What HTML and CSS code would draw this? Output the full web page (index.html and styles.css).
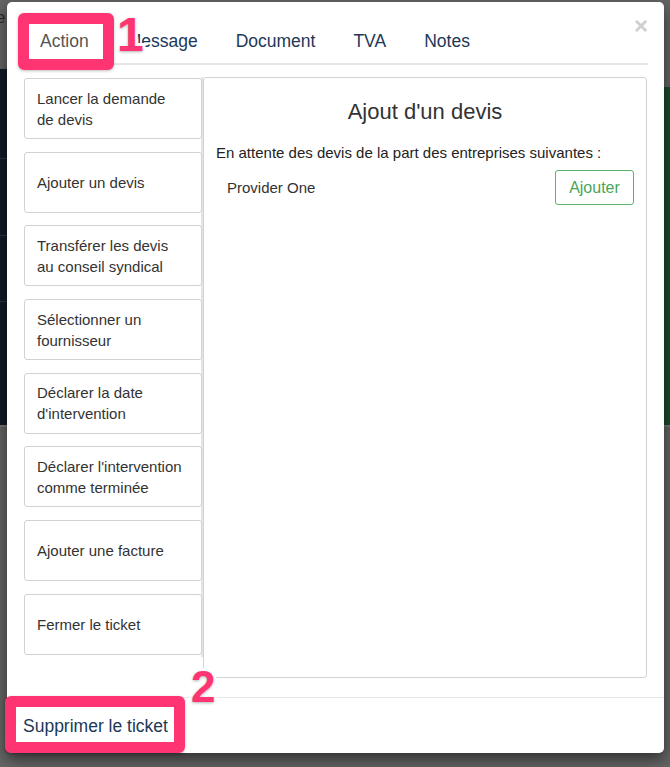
FILE: index.html
```html
<!DOCTYPE html>
<html lang="fr">
<head>
  <meta charset="UTF-8" />
  <title>Ticket</title>
  <link rel="stylesheet" href="styles.css">
</head>
<body>
  <!-- page behind the overlay -->
  <div class="page-bg">
    <span class="bg-letter">e</span>
    <div class="bg-left"></div>
    <div class="bg-right"></div>
  </div>

  <div class="modal">
    <button class="close" title="Fermer">&times;</button>

    <ul class="tabs">
      <li class="active"><a href="#">Action</a></li>
      <li><a href="#">Message</a></li>
      <li><a href="#">Document</a></li>
      <li><a href="#">TVA</a></li>
      <li><a href="#">Notes</a></li>
    </ul>

    <div class="modal-body">
      <div class="steps">
        <button class="step">Lancer la demande de devis</button>
        <button class="step">Ajouter un devis</button>
        <button class="step">Transférer les devis au conseil syndical</button>
        <button class="step">Sélectionner un fournisseur</button>
        <button class="step">Déclarer la date d'intervention</button>
        <button class="step">Déclarer l'intervention comme terminée</button>
        <button class="step">Ajouter une facture</button>
        <button class="step">Fermer le ticket</button>
      </div>

      <div class="panel">
        <h2>Ajout d'un devis</h2>
        <p class="waiting">En attente des devis de la part des entreprises suivantes :</p>
        <div class="provider">
          <span>Provider One</span>
          <button class="btn-add">Ajouter</button>
        </div>
      </div>
    </div>

    <div class="modal-footer">
      <a href="#" class="delete">Supprimer le ticket</a>
    </div>

    <!-- screenshot annotations -->
    <div class="mark mark-tab"></div>
    <span class="num num-1">1</span>
    <div class="mark mark-delete"></div>
    <span class="num num-2">2</span>
  </div>
</body>
</html>
```

FILE: styles.css
```css
html, body { height: 100%; }
body {
  margin: 0;
  background: #656565;
  font-family: "Liberation Sans", Arial, sans-serif;
  color: #333;
  position: relative;
  overflow: hidden;
}

/* dimmed page behind the modal */
.page-bg { position: absolute; inset: 0; }
.bg-letter {
  position: absolute; top: 8px; left: -4px;
  font-size: 17px; color: #2a2a2a;
}
.bg-left {
  position: absolute; left: 0; top: 69px;
  width: 10px; height: 356px;
  background-image: linear-gradient(#0f1a29 0 89px, #2c3544 89px 90px, #0f1a29 90px 166px, #2c3544 166px 167px, #0f1a29 167px 232px, #2c3544 232px 233px, #0f1a29 233px);
  border-bottom: 2px solid #777;
}
.bg-right {
  position: absolute; right: 0; top: 87px;
  width: 10px; height: 338px;
  background: #1f4a2a;
  border-bottom: 2px solid #777;
}

.modal {
  position: relative;
  margin: 2px 0 0 7px;
  width: 657px; height: 751px;
  background: #fff;
  border-radius: 5px;
  box-shadow: 0 6px 16px rgba(0,0,0,0.55);
  display: flex; flex-direction: column;
}

.close {
  position: absolute; top: 12px; right: 16px;
  border: none; background: none; padding: 0;
  font-family: "Liberation Sans", Arial, sans-serif;
  font-size: 24px; font-weight: bold; line-height: 1;
  color: #cfcfcf; cursor: pointer;
}

.tabs {
  list-style: none;
  display: flex;
  margin: 0 16px 0 13px; padding: 0;
  border-bottom: 2px solid #e6e6e6;
}
.tabs a {
  display: block;
  padding: 28px 19px 11px;
  font-size: 17.5px; line-height: 22px;
  color: #1c3858; text-decoration: none;
}
.tabs li:first-child a { padding-left: 20px; }
.tabs li.active a { color: #555; }

.modal-body {
  display: flex;
  margin: 12px 17px 0;
  height: 601px;
}

.steps {
  width: 177px;
  display: flex; flex-direction: column; gap: 12.7px;
  padding-top: 1px; padding-bottom: 2px;
  border-right: 2px solid #e4e4e4;
  align-self: flex-start;
}
.step {
  height: 61px;
  margin-right: -1px;
  padding: 0 17px 0 12px;
  border: 1px solid #d2d2d2; border-radius: 3px;
  background: #fff;
  text-align: left;
  font-family: "Liberation Sans", Arial, sans-serif;
  font-size: 15px; line-height: 21px;
  color: #333;
  cursor: pointer;
}

.panel {
  flex: 1;
  border: 1px solid #d2d2d2; border-radius: 3px;
  padding: 0 12px;
}
.panel h2 {
  margin: 21px 0 0;
  text-align: center;
  font-size: 22px; font-weight: normal; line-height: 26px;
  color: #333;
}
.waiting {
  margin: 18px 0 0;
  font-size: 15px; line-height: 20px;
  color: #222;
}
.provider {
  display: flex; align-items: center; justify-content: space-between;
  margin-top: 7px;
  padding-left: 11px;
  font-size: 15px; color: #333;
}
.btn-add {
  width: 79px; height: 35px;
  border: 1px solid #5cb36b; border-radius: 3px;
  background: #fff;
  font-family: "Liberation Sans", Arial, sans-serif;
  font-size: 16px; color: #4aa55a;
  cursor: pointer;
}

.modal-footer {
  margin-top: 19px;
  border-top: 1px solid #e6e6e6;
  flex: 1;
  display: flex; align-items: center;
  padding-left: 16px;
}
.delete {
  font-size: 17.5px; color: #1c3858; text-decoration: none;
  margin-top: 1px;
}

/* pink highlight boxes and numbers */
.mark {
  position: absolute;
  border: 11.5px solid #ff3472;
  border-radius: 6px;
  box-shadow: 0 1px 3px rgba(0,0,0,0.25);
}
.mark-tab { left: 11px; top: 11px; width: 74px; height: 35px; }
.mark-delete { left: -2px; top: 694px; width: 158px; height: 35px; }

.num {
  position: absolute;
  font-family: "Liberation Sans", Arial, sans-serif;
  font-weight: bold; color: #ff3472;
  -webkit-text-stroke: 6px #fff;
  paint-order: stroke fill;
  text-shadow: 0 1px 3px rgba(0,0,0,0.3);
  line-height: 1;
}
.num-1 { left: 110px; top: 9px; font-size: 48px; }
.num-2 { left: 184px; top: 663px; font-size: 44px; }
```
